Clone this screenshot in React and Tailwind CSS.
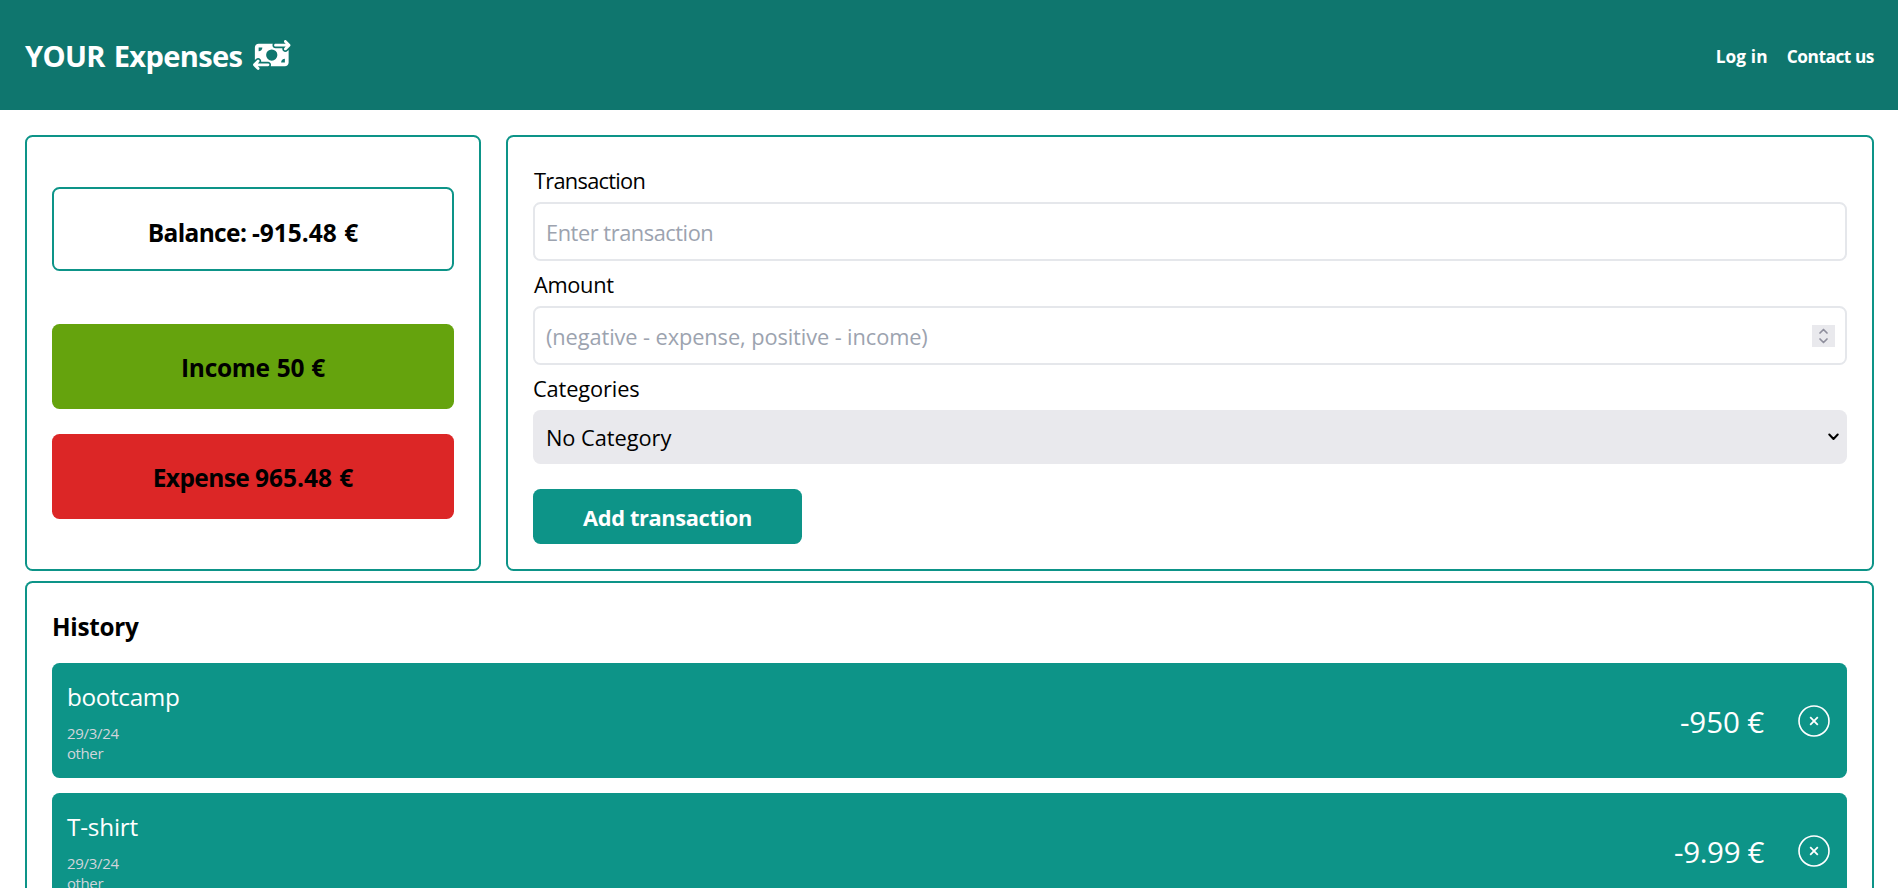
import { FaMoneyBillTransfer } from "react-icons/fa6";

const transactions = [
  { name: "bootcamp", date: "29/3/24", category: "other", amount: "-950 €", nameTracking: "tracking-[-0.35px]", amountTracking: "tracking-[-0.1px]" },
  { name: "T-shirt", date: "29/3/24", category: "other", amount: "-9.99 €", nameTracking: "tracking-[-0.2px]", amountTracking: "tracking-[-0.35px]" },
];

function Header() {
  return (
    <header className="flex h-[110px] shrink-0 items-center justify-between bg-[#0f766e] pr-[24px] pl-[25px] font-bold text-white">
      <h1 className="flex items-center gap-[11px] text-[29.1px] leading-[40px]">
        <span className="pt-px tracking-[-0.67px] [word-spacing:2px]">YOUR Expenses</span>
        <FaMoneyBillTransfer className="h-[30px] w-[37.5px]" />
      </h1>
      <nav className="flex gap-[19px] pt-[2px] text-[17.3px] leading-[25px]">
        <a className="tracking-[0.1px]">Log in</a>
        <a className="tracking-[-0.45px]">Contact us</a>
      </nav>
    </header>
  );
}

function Summary() {
  return (
    <section className="flex h-[436px] w-[456px] shrink-0 flex-col rounded-[7.5px] border-2 border-[#0d9488] px-[25px] pt-[50px] text-[24.5px] font-bold">
      <div className="flex h-[84px] items-center justify-center rounded-[7.5px] border-2 border-[#0d9488] pt-[8px]">
        <span className="tracking-[-0.65px]">
          Balance: <span className="tracking-[0px] [word-spacing:1px]">-915.48 €</span>
        </span>
      </div>
      <div className="mt-[53px] flex h-[85px] items-center justify-center rounded-[7.5px] bg-[#65a30d] pt-[3px] tracking-[-0.3px] [word-spacing:1px]">
        Income 50 €
      </div>
      <div className="mt-[25px] flex h-[85px] items-center justify-center rounded-[7.5px] bg-[#dc2626] pt-[3px]">
        <span className="tracking-[-0.6px]">
          Expense <span className="tracking-[0px] [word-spacing:1px]">965.48 €</span>
        </span>
      </div>
    </section>
  );
}

function TransactionForm() {
  return (
    <form className="flex h-[436px] grow flex-col rounded-[7.5px] border-2 border-[#0d9488] p-[25px] text-[21.8px]">
      <label className="mb-[3px] pt-px pl-px leading-[36px] tracking-[-0.72px]">Transaction</label>
      <div className="flex h-[59px] items-center rounded-[7.5px] border-2 border-[#e5e7eb] px-[10px]">
        <input
          className="grow pt-[4px] pl-px tracking-[-0.45px] outline-none placeholder:text-[#9ca3af]"
          placeholder="Enter transaction"
        />
      </div>
      <label className="mt-[6px] mb-[3px] pl-px leading-[36px] tracking-[-0.32px]">Amount</label>
      <div className="flex h-[59px] items-center rounded-[7.5px] border-2 border-[#e5e7eb] px-[10px]">
        <input
          className="grow pt-[4px] pl-px tracking-[-0.1px] outline-none placeholder:text-[#9ca3af]"
          placeholder="(negative - expense, positive - income)"
        />
        <svg className="h-[22px] w-[23px] bg-[#e9e9ed]" viewBox="0 0 23 22" fill="none" stroke="#8f8f9d" strokeWidth="1.7" strokeLinecap="round" strokeLinejoin="round">
          <path d="M8 8L11.5 4.5L15 8M8 14L11.5 17.5L15 14" />
        </svg>
      </div>
      <label className="mt-[6px] mb-[3px] leading-[36px] tracking-[-0.13px]">Categories</label>
      <div className="flex h-[54px] items-center rounded-[7.5px] bg-[#e9e9ed] pr-[8px] pl-[13px]">
        <select className="grow appearance-none pt-[3px] tracking-[-0.05px] outline-none">
          <option>No Category</option>
        </select>
        <svg className="h-[8px] w-[11px]" viewBox="0 0 11 8" fill="none" stroke="#000" strokeWidth="2" strokeLinecap="round" strokeLinejoin="round">
          <path d="M1.3 1.5L5.5 6L9.7 1.5" />
        </svg>
      </div>
      <button type="button" className="mt-[25px] h-[55px] w-[269px] rounded-[7.5px] bg-[#0d9488] pt-[4px] font-bold tracking-[-0.36px] text-white">
        Add transaction
      </button>
    </form>
  );
}

function Transaction({ item }) {
  return (
    <li className="flex h-[115px] items-center justify-between rounded-[7.5px] bg-[#0d9488] pr-[17px] pl-[15px] text-white">
      <div>
        <div className={"pt-px text-[24.3px] leading-[36px] " + item.nameTracking}>{item.name}</div>
        <div className="mt-[8px] text-[15px] leading-[20px] tracking-[-0.3px] text-[#d1d5db]">{item.date}</div>
        <div className="text-[15px] leading-[20px] tracking-[-0.4px] text-[#d1d5db]">{item.category}</div>
      </div>
      <div className="flex items-center gap-[34px]">
        <span className={"pt-[2px] text-[29.5px] leading-[40px] " + item.amountTracking}>{item.amount}</span>
        <svg className="h-[32px] w-[32px]" viewBox="0 0 32 32" fill="none" stroke="#fff">
          <circle cx="16" cy="16" r="15" strokeWidth="1.6" />
          <path d="M12.2 12.2L19.8 19.8M19.8 12.2L12.2 19.8" strokeWidth="1.8" />
        </svg>
      </div>
    </li>
  );
}

export default function App() {
  return (
    <div className="flex h-[888px] flex-col overflow-hidden bg-white font-['Open_Sans',sans-serif] text-black">
      <Header />
      <main className="pt-[25px] pr-[24px] pl-[25px]">
        <div className="flex gap-[25px]">
          <Summary />
          <TransactionForm />
        </div>
        <section className="mt-[10px] h-[420px] rounded-t-[7.5px] border-2 border-b-0 border-[#0d9488] p-[25px]">
          <h2 className="mb-[18px] pt-px text-[24.3px] leading-[36px] font-bold tracking-[-0.3px]">History</h2>
          <ul className="flex flex-col gap-[15px]">
            {transactions.map((item) => (
              <Transaction key={item.name} item={item} />
            ))}
          </ul>
        </section>
      </main>
    </div>
  );
}
